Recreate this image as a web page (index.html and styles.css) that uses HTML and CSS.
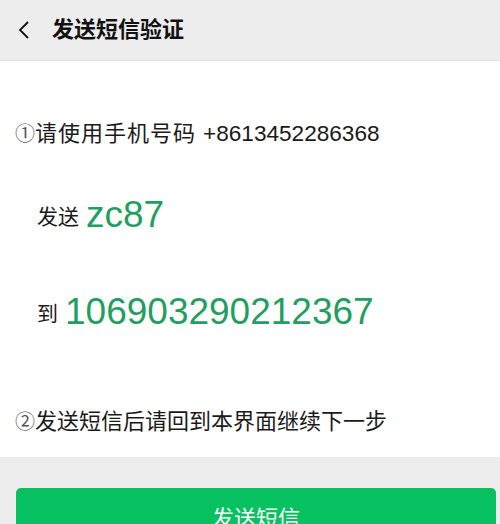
FILE: index.html
```html
<!DOCTYPE html>
<html lang="zh">
<head>
<meta charset="utf-8">
<link rel="stylesheet" href="styles.css">
</head>
<body>
<div class="header">
  <svg class="back" width="14" height="20" viewBox="0 0 14 20"><path d="M11 2 L3 10 L11 18" fill="none" stroke="#111" stroke-width="1.8"/></svg>
  <span class="title">发送短信验证</span>
</div>
<div class="content">
  <div class="line first"><span class="circ">①</span><span class="wide">请使用手机号码</span><span class="num">+8613452286368</span></div>
  <div class="row r1"><span class="label">发送</span><span class="big">zc87</span></div>
  <div class="row r2"><span class="label">到</span><span class="big">106903290212367</span></div>
  <div class="line last"><span class="circ">②</span>发送短信后请回到本界面继续下一步</div>
</div>
<div class="footer">
  <div class="btn">发送短信</div>
</div>
</body>
</html>
```
FILE: styles.css
```css
html, body {
  margin: 0;
  padding: 0;
  background: #ededed;
  font-family: "Liberation Sans", "Noto Sans CJK SC", sans-serif;
  color: #111;
}
.header {
  height: 60px;
  display: flex;
  align-items: center;
  padding-left: 17px;
  border-bottom: 1px solid #e2e2e2;
}
.back {
  display: block;
}
.title {
  margin-left: 21px;
  font-size: 22px;
  font-weight: bold;
  line-height: 30px;
}
.content {
  background: #fff;
  padding: 56px 0 19px;
}
.line {
  font-size: 22px;
  line-height: 32px;
  padding-left: 15px;
  color: #1a1a1a;
}
.circ {
  font-family: "Noto Sans CJK SC", sans-serif;
  color: #555;
  font-size: 20px;
}
.wide {
  letter-spacing: 1px;
}
.num {
  font-size: 22.6px;
  margin-left: 7px;
}
.row {
  display: flex;
  align-items: center;
  height: 50px;
  padding-left: 37px;
}
.r1 { margin-top: 40px; }
.r2 { margin-top: 47px; }
.last { margin-top: 68px; }
.label {
  font-size: 21px;
  color: #1a1a1a;
  margin-right: 7px;
}
.big {
  font-size: 37px;
  color: #1f9f60;
}
.footer {
  padding: 31px 4px 0 16px;
}
.btn {
  height: 56px;
  background: #07c160;
  border-radius: 5px;
  color: #fff;
  font-size: 22px;
  display: flex;
  align-items: center;
  justify-content: center;
  font-family: "Noto Sans CJK SC", sans-serif;
}
```
